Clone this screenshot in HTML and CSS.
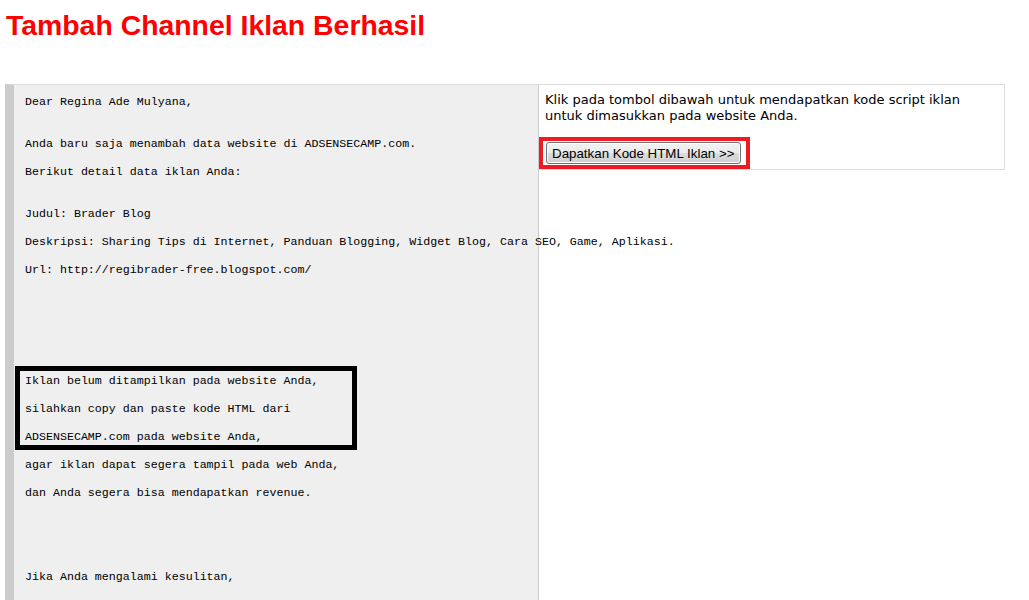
FILE: index.html
```html
<!DOCTYPE html>
<html lang="en">
<head>
    <meta charset="UTF-8">
    <meta name="viewport" content="width=device-width, initial-scale=1.0">
    <title>Tambah Channel Iklan Berhasil</title>
    <link rel="stylesheet" href="styles.css">
</head>
<body>
    <h1>Tambah Channel Iklan Berhasil</h1>

    <div class="layout">
        <div class="mail">
            <p class="line gap">Dear Regina Ade Mulyana,</p>
            <p class="line">Anda baru saja menambah data website di ADSENSECAMP.com.</p>
            <p class="line gap">Berikut detail data iklan Anda:</p>
            <p class="line">Judul: Brader Blog</p>
            <p class="line">Deskripsi: Sharing Tips di Internet, Panduan Blogging, Widget Blog, Cara SEO, Game, Aplikasi.</p>
            <p class="line">Url: http://regibrader-free.blogspot.com/</p>

            <div class="notice">
                <p class="line">Iklan belum ditampilkan pada website Anda,</p>
                <p class="line">silahkan copy dan paste kode HTML dari</p>
                <p class="line">ADSENSECAMP.com pada website Anda,</p>
            </div>
            <p class="line">agar iklan dapat segera tampil pada web Anda,</p>
            <p class="line big-gap">dan Anda segera bisa mendapatkan revenue.</p>
            <p class="line">Jika Anda mengalami kesulitan,</p>
        </div>

        <div class="side">
            <p class="side-text">Klik pada tombol dibawah untuk mendapatkan kode script iklan<br>untuk dimasukkan pada website Anda.</p>
            <div class="mark">
                <button type="button">Dapatkan Kode HTML Iklan &gt;&gt;</button>
            </div>
        </div>
    </div>
</body>
</html>
```

FILE: styles.css
```css
body {
    margin: 0;
    padding: 0 5px;
    background: #fff;
    color: #000;
}
h1 {
    font-family: "Liberation Sans", Arial, sans-serif;
    font-size: 28.4px;
    font-weight: bold;
    line-height: 32px;
    color: #ff0000;
    margin: 9px 0 43px 1px;
}
.layout {
    display: flex;
    align-items: flex-start;
}
.mail {
    width: 513px;
    flex-shrink: 0;
    background: #efefef;
    border-top: 1px solid #dddddd;
    border-left: 9px solid #cccccc;
    border-right: 1px solid #cccccc;
    padding: 10px 0 40px 11px;
    font-family: "Liberation Mono", "Courier New", monospace;
    font-size: 11.65px;
}
.line {
    margin: 0 0 14px;
    line-height: 14px;
    white-space: nowrap;
}
.line.gap {
    margin-bottom: 28px;
}
.line.big-gap {
    margin-bottom: 70px;
}
.notice {
    box-sizing: border-box;
    width: 342px;
    margin: 89px 0 8px -10px;
    padding: 3px 0 1px 5px;
    border: 5px solid #000;
}
.notice .line:last-child {
    margin-bottom: 0;
}
.side {
    width: 459px;
    background: #fff;
    border: 1px solid #dddddd;
    border-left: none;
    padding: 7px 0 0 6px;
    font-family: "DejaVu Sans", Verdana, sans-serif;
    font-size: 13px;
}
.side-text {
    margin: 0;
    line-height: 16px;
}
.mark {
    width: max-content;
    margin: 13px 0 0 -6px;
    padding: 1px 5px 1px 3px;
    border: 4px solid #ed1c24;
}
button {
    display: block;
    height: 22px;
    padding: 1px 5px;
    font-family: "Liberation Sans", Arial, sans-serif;
    font-size: 13.333px;
    color: #000;
    border: 1px solid #707070;
    border-radius: 3px;
    background: linear-gradient(#f2f2f2 0%, #ebebeb 50%, #dddddd 50%, #cfcfcf 100%);
    box-shadow: inset 0 0 0 1px #fcfcfc;
}
```
